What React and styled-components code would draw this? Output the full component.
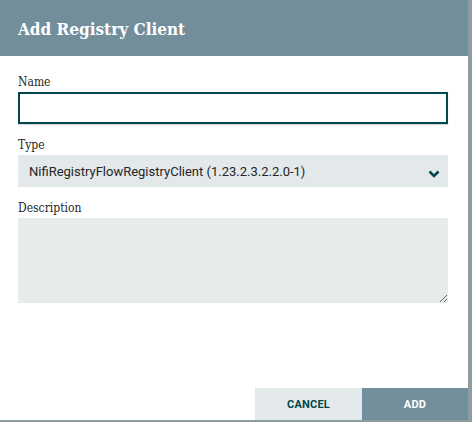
import styled, { createGlobalStyle } from "styled-components";

const GlobalStyle = createGlobalStyle`
  html, body {
    margin: 0;
    padding: 0;
    background: #8e9ba1;
  }
  * {
    box-sizing: border-box;
  }
`;

const Dialog = styled.div`
  width: 468px;
  height: 420px;
  background: #ffffff;
  display: flex;
  flex-direction: column;
`;

const Header = styled.div`
  height: 56px;
  background: #728e9b;
  display: flex;
  align-items: center;
  padding: 1px 18px 0;
  color: #ffffff;
  font-family: "DejaVu Serif", "Liberation Serif", serif;
  font-stretch: condensed;
  font-weight: 700;
  font-size: 17px;
`;

const Body = styled.div`
  flex: 1;
  padding: 18px 20px 0 18px;
  display: flex;
  flex-direction: column;
  gap: 13px;
`;

const Field = styled.div`
  display: flex;
  flex-direction: column;
`;

const Label = styled.label`
  font-family: "DejaVu Serif", "Liberation Serif", serif;
  font-stretch: condensed;
  font-size: 12px;
  line-height: 16px;
  color: #262626;
  margin-bottom: 2px;
`;

const TextInput = styled.input`
  height: 32px;
  border: 2px solid #004849;
  background: #ffffff;
  box-shadow: 0 1px 1px rgba(0, 0, 0, 0.15);
  outline: none;
  padding: 0 8px;
  font-family: Roboto, sans-serif;
  font-size: 13px;
`;

const Select = styled.div`
  height: 32px;
  background: #e3e8eb;
  display: flex;
  align-items: center;
  justify-content: space-between;
  padding: 0 8px 0 11px;
  font-family: Roboto, sans-serif;
  font-size: 13px;
  color: #262626;

  svg {
    margin-top: 6px;
  }
`;

const TextArea = styled.textarea`
  height: 85px;
  border: none;
  background: #e6ecec;
  outline: none;
  padding: 6px 10px;
  font-family: Roboto, sans-serif;
  font-size: 13px;
`;

const Footer = styled.div`
  display: flex;
  justify-content: flex-end;
`;

const Button = styled.button`
  width: ${(p) => (p.$primary ? "106px" : "107px")};
  height: 32px;
  border: none;
  background: ${(p) => (p.$primary ? "#728e9b" : "#e3e8eb")};
  color: ${(p) => (p.$primary ? "#ffffff" : "#004849")};
  font-family: Roboto, sans-serif;
  font-weight: 700;
  font-size: 11px;
  letter-spacing: 0.2px;
  cursor: pointer;
`;

const Chevron = () => (
  <svg width="12" height="8" viewBox="0 0 12 8">
    <polyline
      points="1.5,1.5 6,6 10.5,1.5"
      fill="none"
      stroke="#004849"
      strokeWidth="2.6"
    />
  </svg>
);

export default function App() {
  return (
    <>
      <GlobalStyle />
      <Dialog>
        <Header>Add Registry Client</Header>
        <Body>
          <Field>
            <Label>Name</Label>
            <TextInput type="text" />
          </Field>
          <Field>
            <Label>Type</Label>
            <Select>
              <span>NifiRegistryFlowRegistryClient (1.23.2.3.2.2.0-1)</span>
              <Chevron />
            </Select>
          </Field>
          <Field>
            <Label>Description</Label>
            <TextArea />
          </Field>
        </Body>
        <Footer>
          <Button>CANCEL</Button>
          <Button $primary>ADD</Button>
        </Footer>
      </Dialog>
    </>
  );
}
